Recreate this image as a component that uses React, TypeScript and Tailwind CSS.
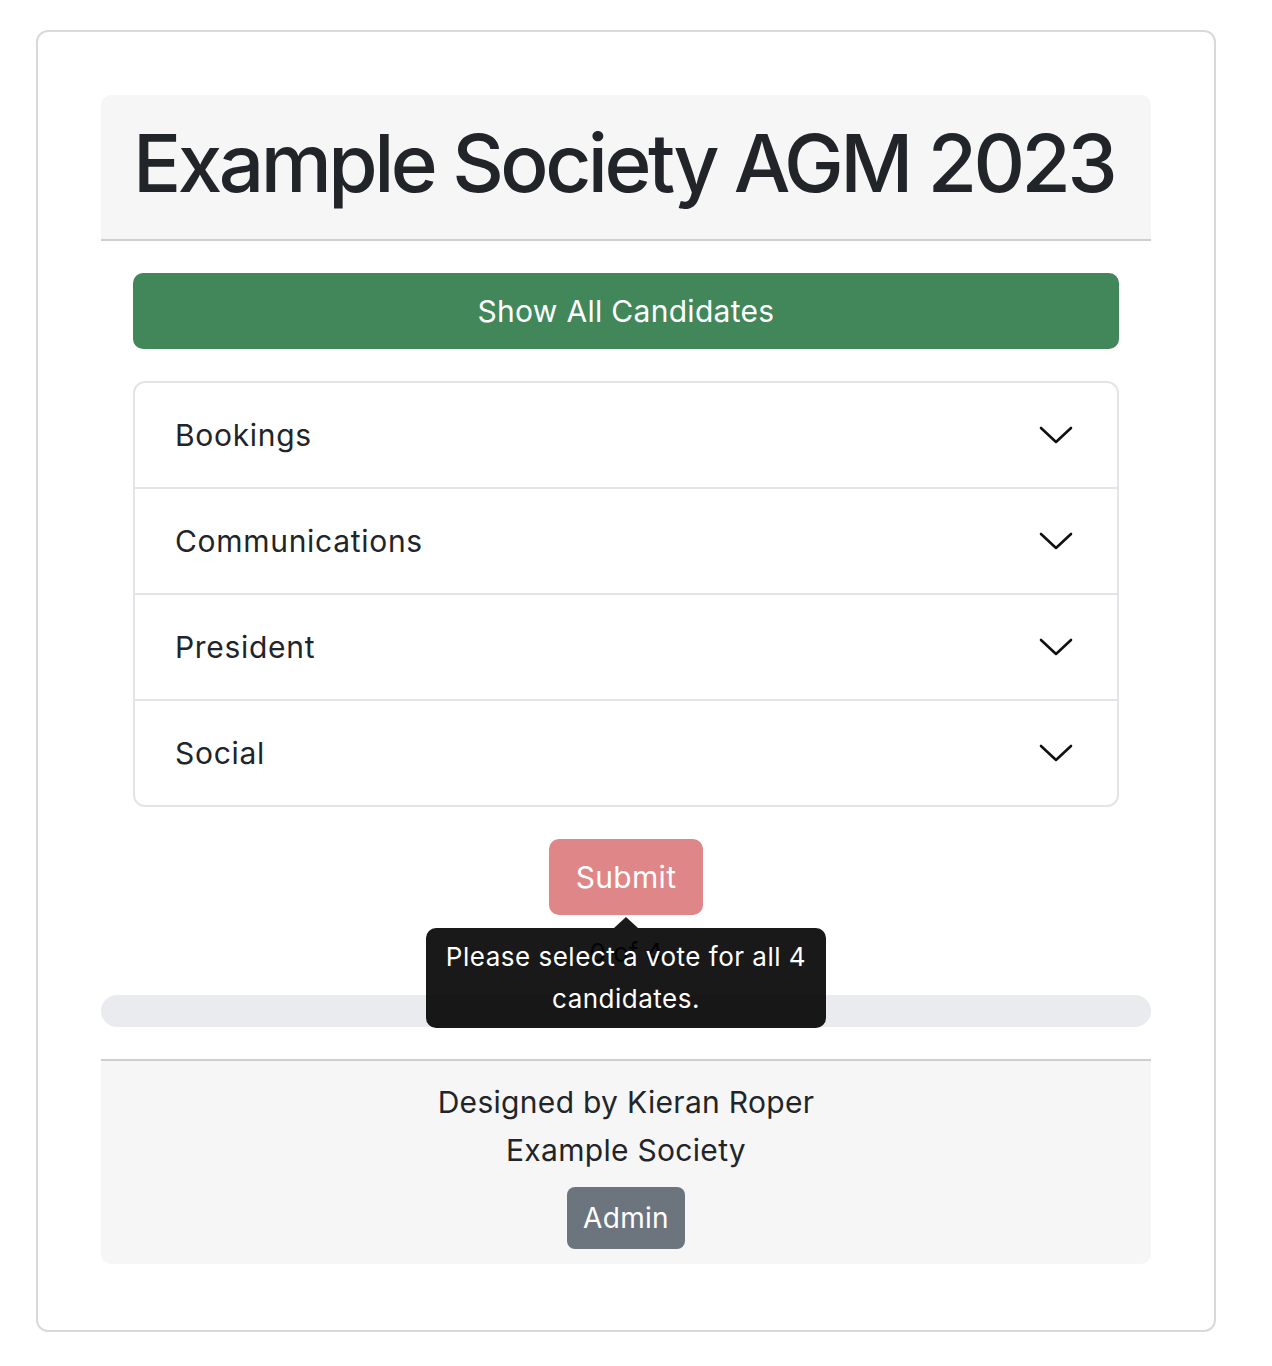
import React from 'react';

const positions = ['Bookings', 'Communications', 'President', 'Social'];

const Chevron: React.FC = () => (
  <svg width="34" height="20" viewBox="0 0 34 20" fill="none">
    <path d="M2 3L17 17L32 3" stroke="#111" strokeWidth="2.6" strokeLinecap="round" strokeLinejoin="round" />
  </svg>
);

const App: React.FC = () => {
  return (
    <div className="bg-white min-h-[1366px] pt-[30px] pl-[36px] font-['Inter',_'Liberation_Sans',_sans-serif] text-[#212529]">
      <div className="w-[1180px] h-[1302px] border-2 border-[#d9d9d9] rounded-[12px] px-[63px] pt-[63px]">
        <div className="bg-[#f6f6f6] rounded-t-[10px] border-b-2 border-[#cfcfcf] px-[32px] pt-[20px] pb-[28px]">
          <h1 className="text-[80px] leading-[96px] font-medium tracking-[-3.5px] whitespace-nowrap">
            Example Society AGM 2023
          </h1>
        </div>

        <div className="px-[32px] pt-[32px]">
          <button className="w-full h-[76px] rounded-[10px] bg-[#41875a] text-white text-[30px] tracking-[0.3px]">
            Show All Candidates
          </button>

          <div className="mt-[32px] border-2 border-[#e2e4e8] rounded-[12px]">
            {positions.map((p, i) => (
              <div
                key={p}
                className={
                  i < positions.length - 1
                    ? 'h-[106px] border-b-2 border-[#e2e4e8] flex items-center justify-between pl-[40px] pr-[44px]'
                    : 'h-[104px] flex items-center justify-between pl-[40px] pr-[44px]'
                }
              >
                <span className="text-[30px] tracking-[0.7px]">{p}</span>
                <Chevron />
              </div>
            ))}
          </div>

          <div className="flex justify-center mt-[32px]">
            <div className="relative">
              <button className="w-[154px] h-[76px] rounded-[10px] bg-[#df8689] text-white text-[30px] tracking-[0.3px]">
                Submit
              </button>
              <div className="absolute left-1/2 -translate-x-1/2 top-full mt-[13px] w-[400px] z-10">
                <div className="absolute left-1/2 -translate-x-1/2 -top-[11px] w-0 h-0 border-l-[12px] border-r-[12px] border-b-[11px] border-l-transparent border-r-transparent border-b-black/90" />
                <div className="bg-black/90 rounded-[10px] px-[16px] py-[8px] text-center text-white text-[26px] leading-[42px] tracking-[0.5px]">
                  Please select a vote for all 4 candidates.
                </div>
              </div>
            </div>
          </div>
        </div>

        <div className="text-center text-[26px] leading-[48px] mt-[14px]">0 of 4</div>

        <div className="mt-[18px] h-[32px] rounded-[16px] bg-[#e9ebef]" />

        <div className="mt-[32px] bg-[#f6f6f6] rounded-b-[10px] border-t-2 border-[#cfcfcf] pt-[17px] pb-[15px] flex flex-col items-center">
          <div className="text-[30px] leading-[48px] tracking-[0.3px]">Designed by Kieran Roper</div>
          <div className="text-[30px] leading-[48px] tracking-[0.3px]">Example Society</div>
          <button className="mt-[13px] w-[118px] h-[62px] rounded-[8px] bg-[#6c757d] text-white text-[28px] tracking-[0.3px]">
            Admin
          </button>
        </div>
      </div>
    </div>
  );
};

export default App;
